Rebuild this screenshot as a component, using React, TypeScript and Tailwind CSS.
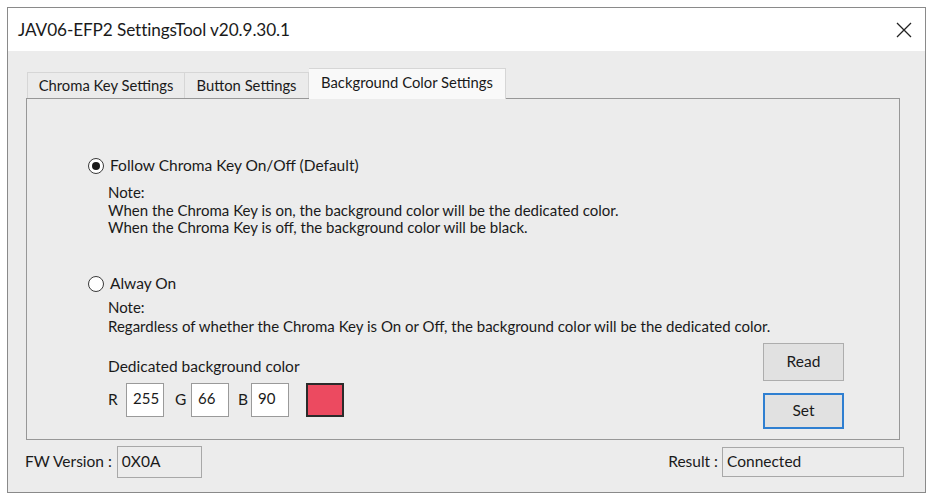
import React from "react";

function Radio({ checked }: { checked: boolean }) {
  return (
    <span className="w-[16px] h-[16px] rounded-full border border-[#3a3a3a] bg-white flex items-center justify-center shrink-0">
      {checked && <span className="w-[8px] h-[8px] rounded-full bg-[#1a1a1a]" />}
    </span>
  );
}

function Field({ value, w }: { value: string; w: string }) {
  return (
    <div className={`${w} h-[34px] bg-white border border-[#9a9a9a] pl-[6px] pt-[5px] text-[15px] leading-[18px] text-[#1a1a1a]`}>
      {value}
    </div>
  );
}

export default function App() {
  return (
    <div
      className="w-[933px] h-[498px] bg-white pt-[7px] pl-[7px] text-[#1a1a1a]"
      style={{ fontFamily: "Lato, 'Noto Sans', sans-serif" }}
    >
      <div className="w-[919px] h-[486px] border border-[#8a8a8a] flex flex-col">
        {/* Title bar */}
        <div className="h-[43px] bg-white flex items-center justify-between pl-[10px] pr-[12px] shrink-0">
          <span className="text-[17.2px] tracking-[-0.1px] pt-[1px]">JAV06-EFP2 SettingsTool v20.9.30.1</span>
          <svg width="16" height="16" viewBox="0 0 16 16" className="mr-[1px]">
            <path d="M1 1 L15 15 M15 1 L1 15" stroke="#222" strokeWidth="1.3" fill="none" />
          </svg>
        </div>
        {/* Body */}
        <div className="flex-1 bg-[#ececec] flex flex-col pt-[17px]">
          {/* Tabs */}
          <div className="flex items-end h-[30px] pl-[19px] relative z-10">
            <div className="h-[26px] w-[158px] border border-b-0 border-[#d6d6d6] bg-[#ebebeb] flex items-center justify-center text-[14.8px]">
              Chroma Key Settings
            </div>
            <div className="h-[26px] w-[124px] border border-b-0 border-l-0 border-[#d6d6d6] bg-[#ebebeb] flex items-center justify-center text-[14.8px]">
              Button Settings
            </div>
            <div className="h-[31px] w-[197px] border border-b-0 border-l-0 border-[#d6d6d6] bg-[#f9f9f9] flex items-center justify-center text-[14.8px] -mb-[1px] pb-[3px]">
              Background Color Settings
            </div>
          </div>
          {/* Panel */}
          <div className="ml-[18px] mr-[25px] h-[342px] border border-[#979797] bg-[#ececec] flex flex-col pl-[61px] pr-[55px] pt-[57px] pb-[10px]">
            <div className="flex items-center h-[20px] text-[15.5px]">
              <Radio checked />
              <span className="ml-[6px]">Follow Chroma Key On/Off (Default)</span>
            </div>
            <div className="pl-[20px] mt-[8px] text-[15px] leading-[17.5px]">
              <div>Note:</div>
              <div>When the Chroma Key is on, the background color will be the dedicated color.</div>
              <div>When the Chroma Key is off, the background color will be black.</div>
            </div>
            <div className="flex items-center h-[20px] text-[15.5px] mt-[37px]">
              <Radio checked={false} />
              <span className="ml-[6px]">Alway On</span>
            </div>
            <div className="pl-[20px] mt-[4px] text-[15px] leading-[19px]">
              <div>Note:</div>
              <div>Regardless of whether the Chroma Key is On or Off, the background color will be the dedicated color.</div>
            </div>
            <div className="mt-auto flex items-end justify-between">
              <div className="pl-[20px] mb-[12px] text-[15.5px]">
                <div className="leading-[18px] mb-[8px]">Dedicated background color</div>
                <div className="flex items-center">
                  <span className="w-[18px]">R</span>
                  <Field value="255" w="w-[38px]" />
                  <span className="ml-[11px] w-[16px]">G</span>
                  <Field value="66" w="w-[38px]" />
                  <span className="ml-[9px] w-[13px]">B</span>
                  <Field value="90" w="w-[38px]" />
                  <div className="ml-[17px] w-[38px] h-[34px] border-2 border-[#2b2b2b] bg-[#ec4a60]" />
                </div>
              </div>
              <div className="flex flex-col gap-[12px]">
                <div className="w-[81px] h-[38px] border border-[#adadad] bg-[#e1e1e1] flex items-center justify-center text-[15.5px]">
                  Read
                </div>
                <div className="w-[81px] h-[36px] border-2 border-[#2f7fd1] bg-[#e1e1e1] flex items-center justify-center text-[15.5px]">
                  Set
                </div>
              </div>
            </div>
          </div>
          {/* Bottom status row */}
          <div className="flex items-center justify-between pl-[17px] pr-[21px] mt-[6px] text-[15.5px]">
            <div className="flex items-center">
              <span>FW Version :</span>
              <div className="ml-[5px] w-[85px] h-[32px] border border-[#a8a8a8] flex items-center pl-[4px]">0X0A</div>
            </div>
            <div className="flex items-center">
              <span>Result :</span>
              <div className="ml-[4px] w-[182px] h-[30px] border border-[#a8a8a8] flex items-center pl-[4px]">Connected</div>
            </div>
          </div>
        </div>
      </div>
    </div>
  );
}
